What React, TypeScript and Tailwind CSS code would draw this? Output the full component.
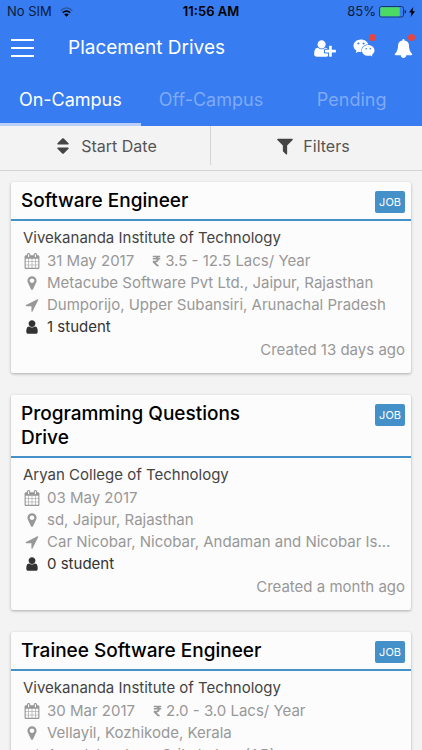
import type { ReactNode } from "react";
import { FaRupeeSign, FaWeixin } from "react-icons/fa";

type Drive = {
	title: string;
	college: string;
	date: string;
	salary?: string;
	company: string;
	location: string;
	students: string;
	created: string;
};

const drives: Drive[] = [
	{
		title: "Software Engineer",
		college: "Vivekananda Institute of Technology",
		date: "31 May 2017",
		salary: "3.5 - 12.5 Lacs/ Year",
		company: "Metacube Software Pvt Ltd., Jaipur, Rajasthan",
		location: "Dumporijo, Upper Subansiri, Arunachal Pradesh",
		students: "1 student",
		created: "Created 13 days ago",
	},
	{
		title: "Programming Questions Drive",
		college: "Aryan College of Technology",
		date: "03 May 2017",
		company: "sd, Jaipur, Rajasthan",
		location: "Car Nicobar, Nicobar, Andaman and Nicobar Is...",
		students: "0 student",
		created: "Created a month ago",
	},
	{
		title: "Trainee Software Engineer",
		college: "Vivekananda Institute of Technology",
		date: "30 Mar 2017",
		salary: "2.0 - 3.0 Lacs/ Year",
		company: "Vellayil, Kozhikode, Kerala",
		location: "Amadalavalasa, Srikakulam (AP)",
		students: "0 student",
		created: "Created 2 months ago",
	},
];

const icons = {
	user: "M1536 1399q0 109-62.500 187t-150.500 78h-854q-88 0-150.500-78t-62.500-187q0-85 8.500-160.500t31.500-152 58.500-131 94-89 134.500-34.500q131 128 313 128t313-128q76 0 134.500 34.500t94 89 58.500 131 31.500 152 8.500 160.500zm-256-887q0 159-112.500 271.500t-271.500 112.500-271.500-112.500-112.500-271.500 112.500-271.500 271.500-112.500 271.500 112.500 112.500 271.500z",
	userPlus:
		"M704 896q-159 0-271.500-112.500t-112.500-271.500 112.500-271.500 271.500-112.500 271.500 112.500 112.500 271.500-112.500 271.500-271.500 112.500zM1664 1024h352q13 0 22.500 9.500t9.500 22.500v192q0 13-9.500 22.500t-22.500 9.500h-352v352q0 13-9.500 22.500t-22.500 9.500h-192q-13 0-22.500-9.500t-9.500-22.500v-352h-352q-13 0-22.500-9.500t-9.500-22.500v-192q0-13 9.500-22.500t22.500-9.500h352v-352q0-13 9.500-22.500t22.500-9.500h192q13 0 22.500 9.500t9.500 22.500v352zM928 1248q0 52 38 90t90 38h256v238q-68 50-171 50h-874q-121 0-194-69t-73-190q0-53 3.500-103.500t14-109 26.500-108.500 43-97.500 62-81 85.500-53.500 111.500-20q19 0 39 17 79 61 154.500 91.500t164.500 30.500 164.500-30.500 154.500-91.500q20-17 39-17 132 0 217 96h-223q-52 0-90 38t-38 90v192z",
	bell: "M1728 1408q0 52-38 90t-90 38h-448q0 106-75 181t-181 75-181-75-75-181h-448q-52 0-90-38t-38-90q50-42 91-88t85-119.500 74.500-158.500 50-206 19.500-260q0-152 117-282.500t307-158.500q-8-19-8-39 0-40 28-68t68-28 68 28 28 68q0 20-8 39 190 28 307 158.500t117 282.500q0 139 19.500 260t50 206 74.500 158.500 85 119.500 91 88z",
	calendar:
		"M192 1664h288v-288h-288v288zm352 0h320v-288h-320v288zm-352-352h288v-320h-288v320zm352 0h320v-320h-320v320zm-352-384h288v-288h-288v288zm736 736h320v-288h-320v288zm-384-736h320v-288h-320v288zm768 736h288v-288h-288v288zm-384-352h320v-320h-320v320zm-352-864v-288q0-13-9.500-22.500t-22.500-9.500h-64q-13 0-22.500 9.500t-9.500 22.500v288q0 13 9.500 22.500t22.500 9.500h64q13 0 22.500-9.500t9.500-22.500zm736 864h288v-320h-288v320zm-384-384h320v-288h-320v288zm384 0h288v-288h-288v288zm32-480v-288q0-13-9.500-22.500t-22.500-9.500h-64q-13 0-22.500 9.500t-9.500 22.500v288q0 13 9.500 22.500t22.500 9.500h64q13 0 22.500-9.500t9.500-22.500zm384-64v1280q0 52-38 90t-90 38h-1408q-52 0-90-38t-38-90v-1280q0-52 38-90t90-38h128v-96q0-66 47-113t113-47h64q66 0 113 47t47 113v96h384v-96q0-66 47-113t113-47h64q66 0 113 47t47 113v96h128q52 0 90 38t38 90z",
	marker: "M1152 640q0-106-75-181t-181-75-181 75-75 181 75 181 181 75 181-75 75-181zm256 0q0 109-33 179l-364 774q-16 33-47.500 52t-67.500 19-67.500-19-46.500-52l-365-774q-33-70-33-179 0-212 150-362t362-150 362 150 150 362z",
	arrow: "M1593 349l-640 1280q-17 35-57 35-5 0-15-2-22-5-35.500-22.500t-13.500-39.500v-576h-576q-22 0-39.500-13.500t-22.500-35.500 4-42 29-30l1280-640q13-7 29-7 27 0 45 19 15 14 18.500 34.500t-6.500 39.500z",
	sort: "M1408 1088q0 26-19 45l-448 448q-19 19-45 19t-45-19l-448-448q-19-19-19-45t19-45 45-19h896q26 0 45 19t19 45zm0-384q0 26-19 45t-45 19h-896q-26 0-45-19t-19-45 19-45l448-448q19-19 45-19t45 19l448 448q19 19 19 45z",
	filter: "M1595 295q17 41-14 70l-493 493v742q0 42-39 59-13 5-25 5-27 0-45-19l-256-256q-19-19-19-45v-486l-493-493q-31-29-14-70 17-39 59-39h1280q42 0 59 39z",
};

function Icon({ name, className }: { name: keyof typeof icons; className: string }) {
	return (
		<svg viewBox={name === "userPlus" ? "0 0 2048 1792" : "0 0 1792 1792"} fill="currentColor" className={className} aria-hidden="true">
			<path d={icons[name]} />
		</svg>
	);
}

function StatusBar() {
	return (
		<div className="grid h-6 grid-cols-3 items-center px-[7px] text-[13px] text-[#0b1c3d]">
			<div className="flex items-center gap-2">
				No SIM
				<svg viewBox="0 0 26 20" fill="none" className="h-[10px] w-[13px]" aria-hidden="true">
					<path d="M1.500 7.500C8-.5 18-.5 24.500 7.500" stroke="#2b559f" strokeWidth="2.500" />
					<path d="M5.500 11.500C10 6.500 16 6.500 20.500 11.500" stroke="#000" strokeWidth="3" />
					<path d="M8.500 15C11 12.500 15 12.500 17.500 15L13 19.500Z" fill="#000" />
				</svg>
			</div>
			<div className="text-center font-semibold text-black">11:56 AM</div>
			<div className="flex items-center justify-end gap-[3px]">
				85%
				<svg viewBox="0 0 27 12" className="h-3 w-[27px]" aria-hidden="true">
					<rect x="0.500" y="0.500" width="24" height="10.500" rx="2" fill="none" stroke="#17366f" />
					<rect x="1.300" y="1.300" width="19.500" height="9" rx="1" fill="#4cd964" />
					<path d="M25.700 3.800q1.300.6 1.300 2t-1.300 2z" fill="#0b1c3d" />
				</svg>
				<svg viewBox="0 0 6 10" className="h-[10px] w-[6px]" aria-hidden="true">
					<path d="M4.200 0L0 5.600h2.500L1.700 10 6 4.200H3.500z" fill="#000" />
				</svg>
			</div>
		</div>
	);
}

function NavButton({ label, dot, children }: { label: string; dot?: boolean; children: ReactNode }) {
	return (
		<button type="button" aria-label={label} className="relative flex h-6 w-6 items-center justify-center">
			{children}
			{dot && <span className="absolute -top-[2px] right-0 size-[7px] rounded-full bg-[#e8453c]" />}
		</button>
	);
}

function Header() {
	return (
		<header className="bg-[#377cf0] text-white">
			<StatusBar />

			<div className="flex h-12 items-center pr-[7px] pl-[11px]">
				<button type="button" aria-label="Menu" className="flex w-[23px] flex-col gap-[6px]">
					<span className="h-[2px] bg-white" />
					<span className="h-[2px] bg-white" />
					<span className="h-[2px] bg-white" />
				</button>
				<h1 className="ml-[34px] flex-1 text-[19px]">Placement Drives</h1>
				<div className="flex gap-[15px]">
					<NavButton label="Add student">
						<Icon name="userPlus" className="h-[19px] w-[22px]" />
					</NavButton>
					<NavButton label="Messages" dot>
						<FaWeixin className="size-[22px]" />
					</NavButton>
					<NavButton label="Notifications" dot>
						<Icon name="bell" className="size-[19px]" />
					</NavButton>
				</div>
			</div>

			<nav className="grid grid-cols-3 text-center text-lg leading-[47px]">
				<a href="#on-campus" className="border-b-[3px] border-[#b9cffa] pt-1">
					On-Campus
				</a>
				<a href="#off-campus" className="pt-1 text-[#7eaaf6]">
					Off-Campus
				</a>
				<a href="#pending" className="pt-1 text-[#7eaaf6]">
					Pending
				</a>
			</nav>
		</header>
	);
}

function Toolbar() {
	return (
		<div className="grid grid-cols-2 border-b border-[#d4d4d4] bg-[#f3f3f3] pb-[5px] text-base text-[#555]">
			<button type="button" className="flex h-[39px] items-center justify-center gap-2 border-r border-[#d4d4d4]">
				<Icon name="sort" className="size-5 text-[#444]" />
				Start Date
			</button>
			<button type="button" className="flex h-[39px] items-center justify-center gap-2 pr-2">
				<Icon name="filter" className="size-5 text-[#444]" />
				Filters
			</button>
		</div>
	);
}

function Row({ icon, className, children }: { icon: keyof typeof icons; className?: string; children: ReactNode }) {
	return (
		<div className={`flex items-center gap-[6px] leading-[22px] ${className ?? ""}`}>
			<span className="flex w-[18px] shrink-0 justify-center">
				<Icon name={icon} className="size-4" />
			</span>
			{children}
		</div>
	);
}

function DriveCard({ drive }: { drive: Drive }) {
	return (
		<article className="rounded-[2px] bg-[#fcfcfc] shadow-[0_1px_3px_rgba(0,0,0,0.3)]">
			<div className="flex items-start justify-between border-b-2 border-[#4490c9] pt-[7px] pr-[6px] pb-[6px] pl-[10px]">
				<h2 className="max-w-[260px] text-[19px] leading-6 font-medium text-black">{drive.title}</h2>
				<span className="mt-[2px] rounded-[2px] bg-[#4490c9] px-1 text-[11px] leading-[22px] text-white">JOB</span>
			</div>

			<div className="px-[6px] pt-[5px] pb-[11px] pl-3 text-[15px] text-[#989898]">
				<p className="leading-6 text-[#444]">{drive.college}</p>
				<Row icon="calendar">
					<span>{drive.date}</span>
					{drive.salary && (
						<span className="ml-3 flex items-center gap-1">
							<FaRupeeSign className="h-3 w-[9px]" />
							{drive.salary}
						</span>
					)}
				</Row>
				<Row icon="marker">
					<span className="truncate">{drive.company}</span>
				</Row>
				<Row icon="arrow">
					<span className="truncate">{drive.location}</span>
				</Row>
				<Row icon="user" className="text-[#333]">
					<span>{drive.students}</span>
				</Row>
				<p className="text-right leading-6">{drive.created}</p>
			</div>
		</article>
	);
}

export default function App() {
	return (
		<div className="h-screen overflow-hidden bg-[#f3f3f3] font-[Inter,sans-serif]">
			<Header />
			<Toolbar />
			<main className="flex flex-col gap-[22px] px-[11px] pt-[11px]">
				{drives.map((drive) => (
					<DriveCard key={drive.title} drive={drive} />
				))}
			</main>
		</div>
	);
}
